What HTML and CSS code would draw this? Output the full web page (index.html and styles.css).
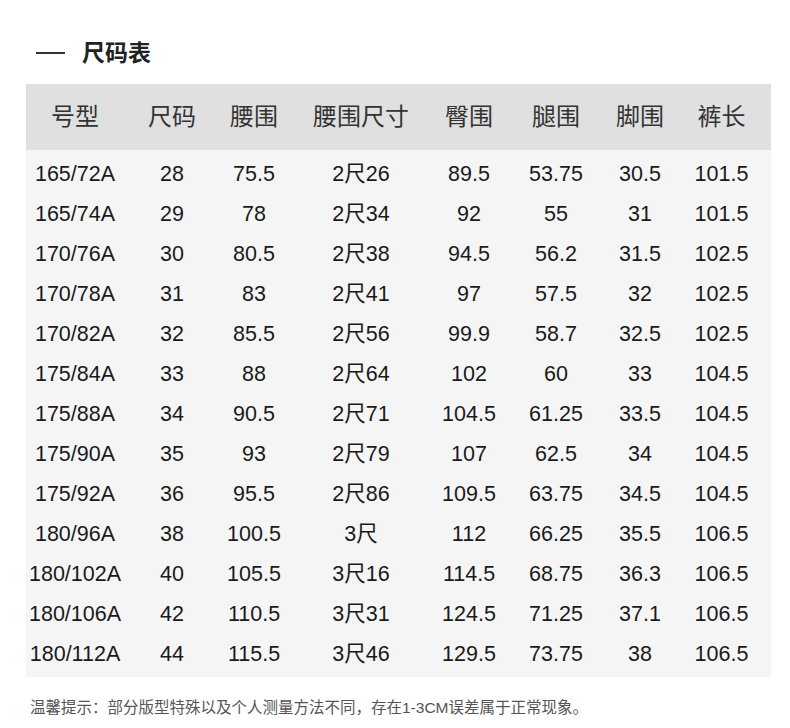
FILE: index.html
```html
<!DOCTYPE html>
<html lang="zh-CN">
<head>
<meta charset="utf-8">
<link rel="stylesheet" href="styles.css">
</head>
<body>
<div class="page">
  <h1 class="title"><span class="dash"></span><span>尺码表</span></h1>
  <div class="table-wrap">
    <table class="size-table">
      <colgroup>
        <col class="c1"><col class="c2"><col class="c3"><col class="c4"><col class="c5"><col class="c6"><col class="c7"><col class="c8">
      </colgroup>
      <thead>
        <tr><th>号型</th><th>尺码</th><th>腰围</th><th>腰围尺寸</th><th>臀围</th><th>腿围</th><th>脚围</th><th>裤长</th></tr>
      </thead>
      <tbody>
        <tr class="first"><td>165/72A</td><td>28</td><td>75.5</td><td>2尺26</td><td>89.5</td><td>53.75</td><td>30.5</td><td>101.5</td></tr>
        <tr><td>165/74A</td><td>29</td><td>78</td><td>2尺34</td><td>92</td><td>55</td><td>31</td><td>101.5</td></tr>
        <tr><td>170/76A</td><td>30</td><td>80.5</td><td>2尺38</td><td>94.5</td><td>56.2</td><td>31.5</td><td>102.5</td></tr>
        <tr><td>170/78A</td><td>31</td><td>83</td><td>2尺41</td><td>97</td><td>57.5</td><td>32</td><td>102.5</td></tr>
        <tr><td>170/82A</td><td>32</td><td>85.5</td><td>2尺56</td><td>99.9</td><td>58.7</td><td>32.5</td><td>102.5</td></tr>
        <tr><td>175/84A</td><td>33</td><td>88</td><td>2尺64</td><td>102</td><td>60</td><td>33</td><td>104.5</td></tr>
        <tr><td>175/88A</td><td>34</td><td>90.5</td><td>2尺71</td><td>104.5</td><td>61.25</td><td>33.5</td><td>104.5</td></tr>
        <tr><td>175/90A</td><td>35</td><td>93</td><td>2尺79</td><td>107</td><td>62.5</td><td>34</td><td>104.5</td></tr>
        <tr><td>175/92A</td><td>36</td><td>95.5</td><td>2尺86</td><td>109.5</td><td>63.75</td><td>34.5</td><td>104.5</td></tr>
        <tr><td>180/96A</td><td>38</td><td>100.5</td><td>3尺</td><td>112</td><td>66.25</td><td>35.5</td><td>106.5</td></tr>
        <tr><td>180/102A</td><td>40</td><td>105.5</td><td>3尺16</td><td>114.5</td><td>68.75</td><td>36.3</td><td>106.5</td></tr>
        <tr><td>180/106A</td><td>42</td><td>110.5</td><td>3尺31</td><td>124.5</td><td>71.25</td><td>37.1</td><td>106.5</td></tr>
        <tr class="last"><td>180/112A</td><td>44</td><td>115.5</td><td>3尺46</td><td>129.5</td><td>73.75</td><td>38</td><td>106.5</td></tr>
      </tbody>
    </table>
  </div>
  <p class="note">温馨提示：部分版型特殊以及个人测量方法不同，存在1-3CM误差属于正常现象。</p>
</div>
</body>
</html>
```

FILE: styles.css
```css
html, body {
  margin: 0;
  padding: 0;
  background: #ffffff;
}

body {
  font-family: "Liberation Sans", "Noto Sans CJK SC", sans-serif;
  color: #222;
}

.page {
  width: 790px;
  height: 728px;
  overflow: hidden;
}

.title {
  margin: 38px 0 0 36px;
  height: 30px;
  display: flex;
  align-items: center;
  gap: 17px;
  font-size: 23px;
  line-height: 30px;
  font-weight: bold;
  color: #222;
}

.dash {
  display: block;
  width: 29px;
  height: 2px;
  background: #333;
}

.table-wrap {
  margin: 16px 0 0 26px;
  width: 745px;
}

.size-table {
  width: 745px;
  border-collapse: collapse;
  table-layout: fixed;
  background: #f5f5f5;
}

.c1 { width: 98px; }
.c2 { width: 96px; }
.c3 { width: 68px; }
.c4 { width: 146px; }
.c5 { width: 70px; }
.c6 { width: 104px; }
.c7 { width: 64px; }
.c8 { width: 99px; }

.size-table thead tr {
  background: #e0e0e0;
}

.size-table th {
  height: 66px;
  padding: 0;
  font-weight: normal;
  font-size: 24px;
  line-height: 28px;
  color: #333;
  text-align: center;
  vertical-align: middle;
  white-space: nowrap;
}

.size-table td {
  height: 40px;
  padding: 0;
  font-size: 21.5px;
  line-height: 24px;
  color: #1a1a1a;
  text-align: center;
  vertical-align: middle;
  white-space: nowrap;
}

.size-table tr.first td {
  padding-top: 4px;
}

.size-table tr.last td {
  padding-bottom: 3px;
}

.note {
  margin: 21px 0 0 30px;
  font-size: 15.5px;
  line-height: 20px;
  color: #555;
  white-space: nowrap;
}
```
